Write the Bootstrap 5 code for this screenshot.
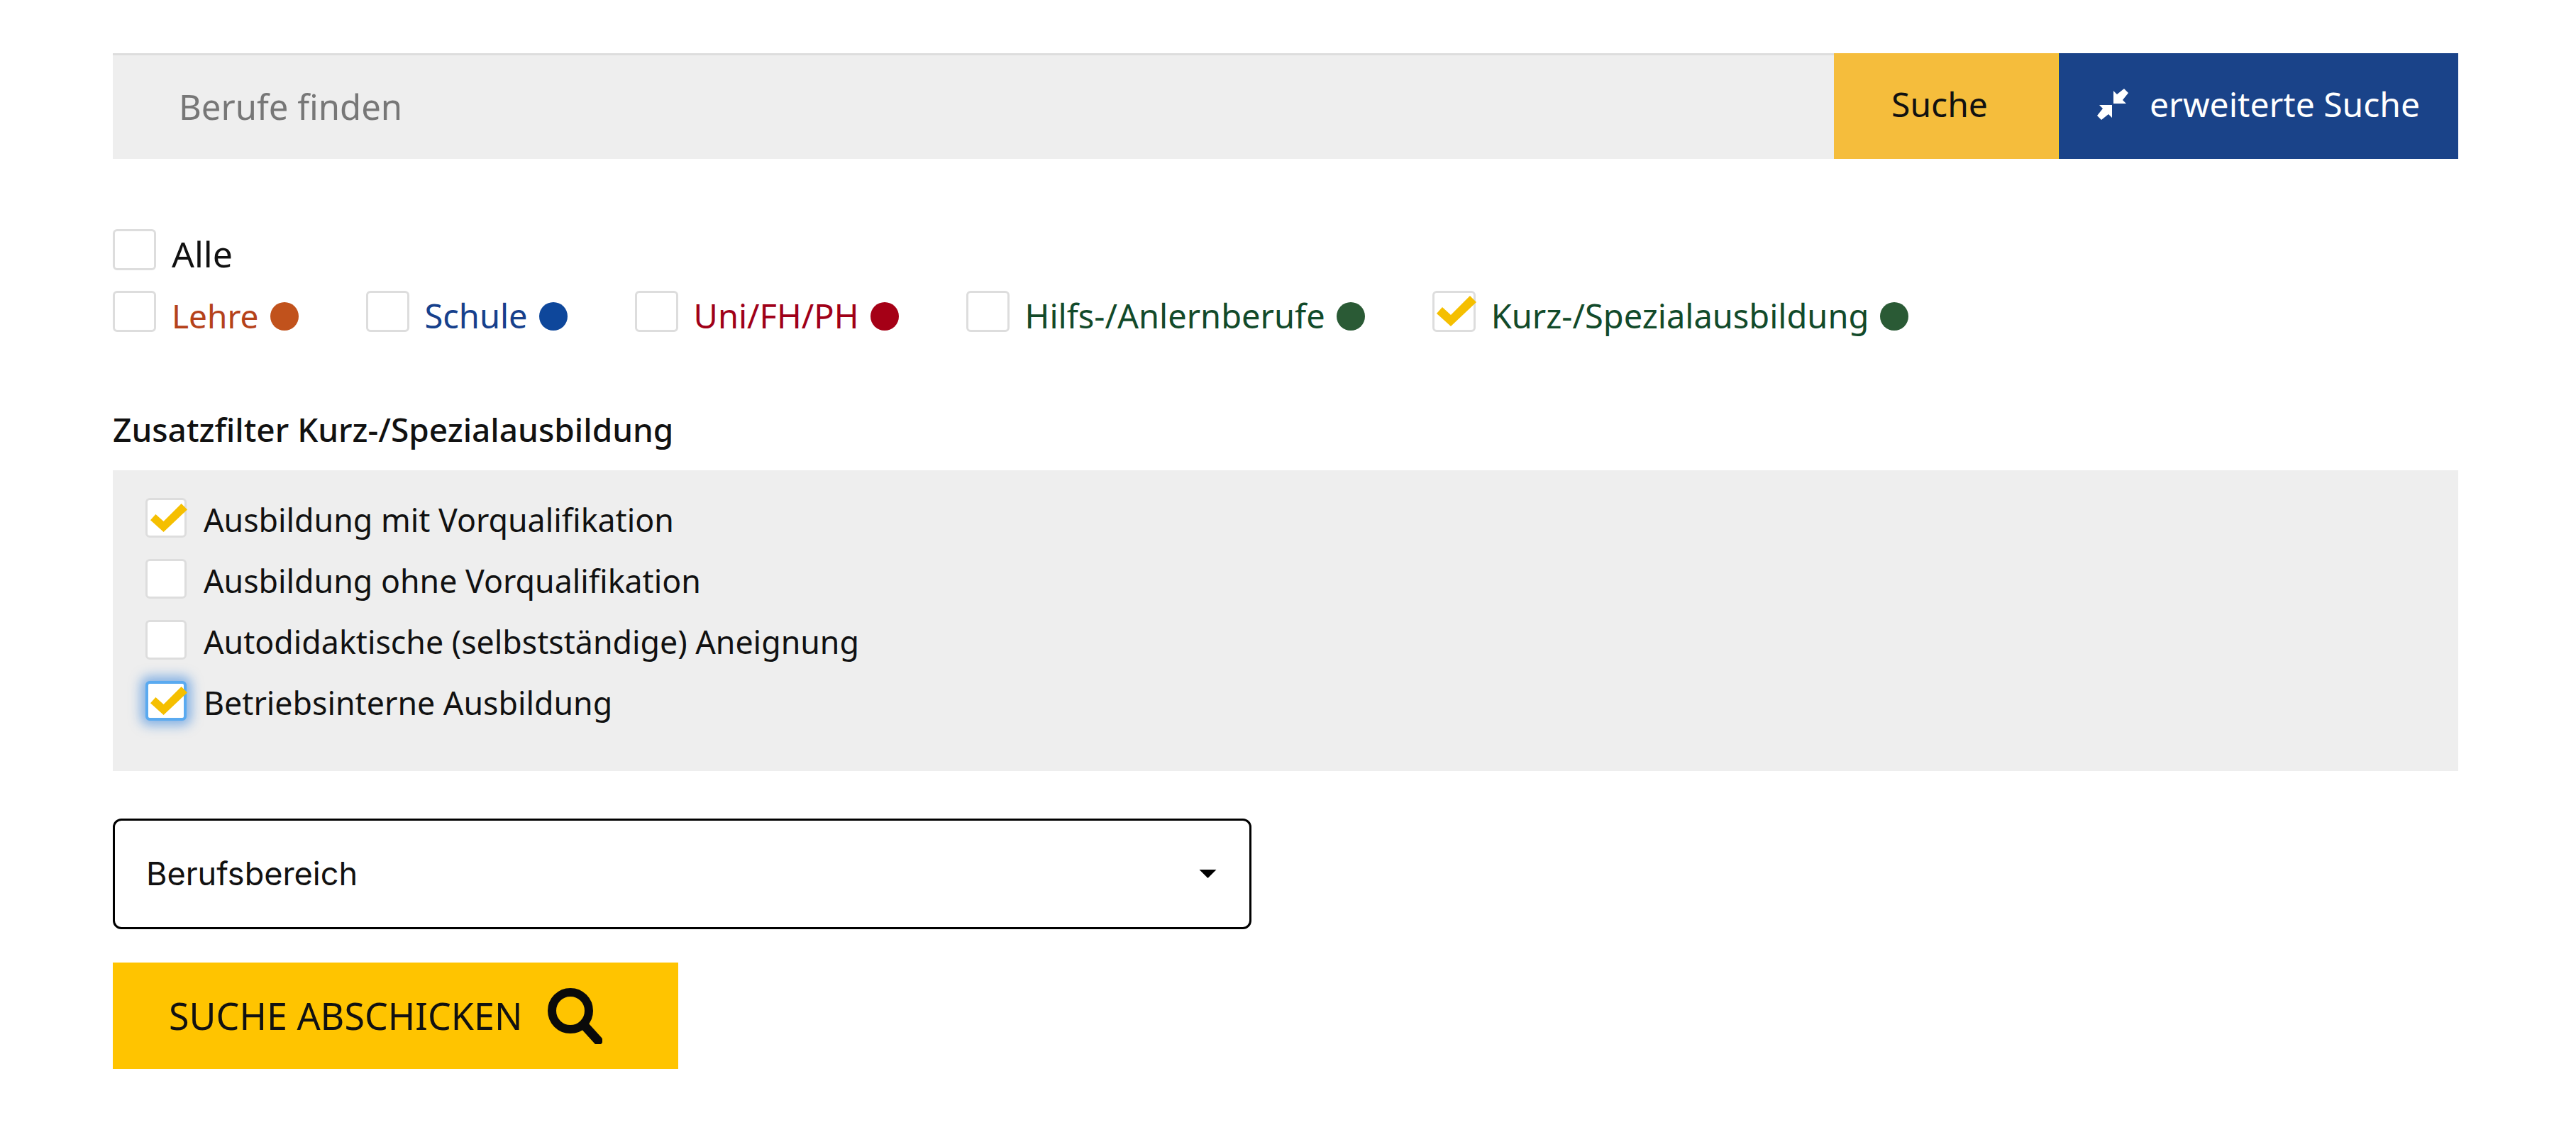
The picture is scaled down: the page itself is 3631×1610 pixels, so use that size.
<!DOCTYPE html>
<html lang="de">
<head>
<meta charset="utf-8">
<title>Berufe finden</title>
<link rel="stylesheet" href="https://cdn.jsdelivr.net/npm/bootstrap@5.3.0/dist/css/bootstrap.min.css">
<style>
body{font-family:"Noto Sans","Liberation Sans",sans-serif;background:#fff;color:#111;}
.page-wrap{width:3306px;margin-left:159px;padding-top:75px;padding-bottom:103px;}
.search-bar{height:149px;}
.search-input.form-control{background:#eee;border:0;border-top:3px solid #ddd;border-radius:0;font-size:49px;padding:0 0 0 93px;color:#777;box-shadow:none;}
.search-input.form-control::placeholder{color:#777;opacity:1;}
.btn-gold.btn{width:318px;background:#f5bd3c;border:0;border-right:2px solid #ffd21f;border-radius:0;font-size:48px;color:#111;padding:0 18px 6px 0;}
.btn-navy.btn{width:563px;background:#1a4389;border:0;border-radius:0;font-size:48px;color:#fff;padding:0 0 6px;gap:30px;}
.cb-box{position:relative;flex:none;display:block;width:61px;height:58px;}
.cb-box .form-check-input{display:block;width:100%;height:100%;margin:0;background:#fff;border:3px solid #ddd;border-radius:6px;float:none;}
.cb-box svg{position:absolute;left:6px;top:7px;width:56px;height:43px;pointer-events:none;}
.cb-focus .form-check-input{border:4px solid #5aaaf0;box-shadow:0 0 16px 7px rgba(50,130,220,.55);}
.filter-top{margin-top:99px;font-size:50px;}
.filter-line{margin-top:29px;gap:95px;font-size:47px;}
.filter-label{padding-top:12px;line-height:46px;margin-left:22px;}
.dot-mark{width:40px;height:40px;border-radius:50%;margin-left:16px;margin-top:13px;flex:none;}
.c-lehre{color:#b5421a;font-size:46px}.d-lehre{background:#c1521c}
.c-schule{color:#16408c}.d-schule{background:#0e479b}
.c-uni{color:#a00018}.d-uni{background:#a50016}
.c-hilfs{color:#124a2a}.d-hilfs{background:#2a5a35}
.extra-title{font-size:46px;font-weight:500;margin:107px 0 0;line-height:60px;color:#111;}
.extra-panel{background:#eee;margin-top:28px;height:424px;padding:39px 0 0 46px;gap:30px;font-size:44.7px;}
.extra-label{padding-top:6px;line-height:1;margin-left:24px;}
.extra-panel .cb-box{width:58px;height:56px;}
.extra-panel .cb-box svg{left:7px;top:8px;width:52px;height:40px;}
.field-select.form-select{width:1605px;height:156px;margin-top:67px;border:3px solid #000;border-radius:12px;font-family:Inter,"Liberation Sans",sans-serif;font-size:45px;color:#111;padding:0 0 0 44px;background-position:right 46px center;background-size:25px 12px;background-image:url("data:image/svg+xml,%3Csvg xmlns='http://www.w3.org/2000/svg' viewBox='0 0 28 14'%3E%3Cpath d='M0 0h28L14 14z' fill='%23000'/%3E%3C/svg%3E");box-shadow:none;}
.btn-send.btn{margin-top:47px;width:797px;height:150px;background:#ffc400;border:0;border-radius:0;font-size:52px;color:#111;padding:0 0 0 79px;gap:35px;}
</style>
</head>
<body>
<main class="page-wrap">
  <form>
    <div class="input-group search-bar flex-nowrap">
      <input class="form-control search-input" type="text" placeholder="Berufe finden">
      <button class="btn btn-gold" type="button">Suche</button>
      <button class="btn btn-navy d-flex align-items-center justify-content-center" type="button">
        <svg width="44" height="44" viewBox="0 0 44 44" aria-hidden="true"><path fill="#fff" d="M23 21V3l5 5 10-8 6 6-8 10 5 5zM21 23v18l-5-5-10 8-6-6 8-10-5-5z"/></svg>
        <span>erweiterte Suche</span>
      </button>
    </div>

    <div class="d-flex align-items-center filter-top">
      <span class="cb-box"><input class="form-check-input" type="checkbox" aria-label="Alle"></span>
      <span class="filter-label">Alle</span>
    </div>
    <div class="d-flex filter-line">
      <div class="d-flex align-items-center"><span class="cb-box"><input class="form-check-input" type="checkbox" aria-label="Lehre"></span><span class="filter-label c-lehre">Lehre</span><span class="dot-mark d-lehre"></span></div>
      <div class="d-flex align-items-center"><span class="cb-box"><input class="form-check-input" type="checkbox" aria-label="Schule"></span><span class="filter-label c-schule">Schule</span><span class="dot-mark d-schule"></span></div>
      <div class="d-flex align-items-center"><span class="cb-box"><input class="form-check-input" type="checkbox" aria-label="Uni/FH/PH"></span><span class="filter-label c-uni">Uni/FH/PH</span><span class="dot-mark d-uni"></span></div>
      <div class="d-flex align-items-center"><span class="cb-box"><input class="form-check-input" type="checkbox" aria-label="Hilfs-/Anlernberufe"></span><span class="filter-label c-hilfs">Hilfs-/Anlernberufe</span><span class="dot-mark d-hilfs"></span></div>
      <div class="d-flex align-items-center"><span class="cb-box"><input class="form-check-input" type="checkbox" checked aria-label="Kurz-/Spezialausbildung"><svg viewBox="0 0 56 43" aria-hidden="true"><polygon points="0 25 8 16 20 27 47 0 56 9 20 43" fill="#f5bf00"/></svg></span><span class="filter-label c-hilfs">Kurz-/Spezialausbildung</span><span class="dot-mark d-hilfs"></span></div>
    </div>

    <h2 class="extra-title">Zusatzfilter Kurz-/Spezialausbildung</h2>
    <div class="extra-panel d-flex flex-column">
      <div class="d-flex align-items-center"><span class="cb-box"><input class="form-check-input" type="checkbox" checked aria-label="Ausbildung mit Vorqualifikation"><svg viewBox="0 0 56 43" aria-hidden="true"><polygon points="0 25 8 16 20 27 47 0 56 9 20 43" fill="#f5bf00"/></svg></span><span class="extra-label">Ausbildung mit Vorqualifikation</span></div>
      <div class="d-flex align-items-center"><span class="cb-box"><input class="form-check-input" type="checkbox" aria-label="Ausbildung ohne Vorqualifikation"></span><span class="extra-label">Ausbildung ohne Vorqualifikation</span></div>
      <div class="d-flex align-items-center"><span class="cb-box"><input class="form-check-input" type="checkbox" aria-label="Autodidaktische (selbstständige) Aneignung"></span><span class="extra-label">Autodidaktische (selbstständige) Aneignung</span></div>
      <div class="d-flex align-items-center"><span class="cb-box cb-focus"><input class="form-check-input" type="checkbox" checked aria-label="Betriebsinterne Ausbildung"><svg viewBox="0 0 56 43" aria-hidden="true"><polygon points="0 25 8 16 20 27 47 0 56 9 20 43" fill="#f5bf00"/></svg></span><span class="extra-label">Betriebsinterne Ausbildung</span></div>
    </div>

    <select class="form-select field-select" aria-label="Berufsbereich">
      <option selected>Berufsbereich</option>
    </select>

    <button class="btn btn-send d-flex align-items-center" type="button">
      <span>SUCHE ABSCHICKEN</span>
      <svg width="78" height="80" viewBox="0 0 78 80" aria-hidden="true"><circle cx="33" cy="33" r="26" fill="none" stroke="#0a0a0a" stroke-width="12"/><path d="M52 53l20 22" fill="none" stroke="#0a0a0a" stroke-width="13" stroke-linecap="round"/></svg>
    </button>
  </form>
</main>
<script src="https://cdn.jsdelivr.net/npm/bootstrap@5.3.0/dist/js/bootstrap.bundle.min.js"></script>
</body>
</html>
